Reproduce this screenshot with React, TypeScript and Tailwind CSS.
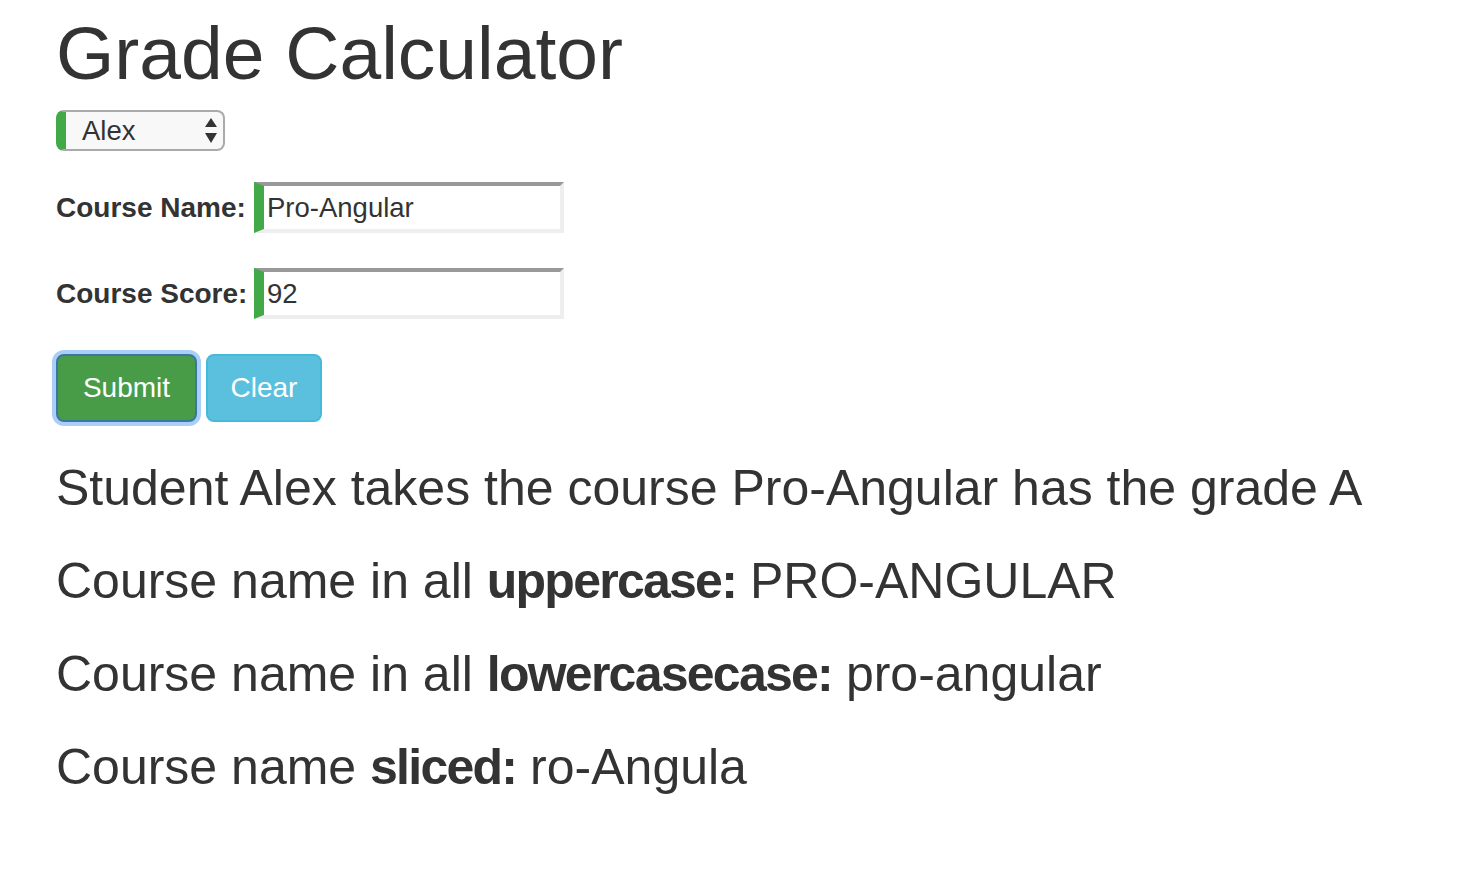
import React from "react";

export default function App() {
  const name = "Alex";
  const course = "Pro-Angular";
  return (
    <div
      className="min-h-screen bg-white text-[#333] pl-[56px]"
      style={{ fontFamily: '"Liberation Sans", Helvetica, Arial, sans-serif' }}
    >
      <h1 className="text-[75px] leading-[80px] font-normal pt-[13px] m-0">Grade Calculator</h1>

      <div className="mt-[17px] w-[169px] h-[41px] flex items-center justify-between border-2 border-[#aaa] border-l-[10px] border-l-[#42A948] rounded-[8px] bg-[#f8f8f8] pl-[16px] pr-[6px]">
        <span className="text-[27.5px] leading-none">{name}</span>
        <svg width="12" height="26" viewBox="0 0 12 26" className="block">
          <polygon points="6,0 12,9 0,9" fill="#333" />
          <polygon points="0,15 12,15 6,25" fill="#333" />
        </svg>
      </div>

      <div className="mt-[31px] flex items-center">
        <label className="w-[198px] font-bold text-[28px] leading-none">Course Name:</label>
        <div className="w-[310px] h-[51px] flex items-center border-solid border-t-4 border-r-4 border-b-4 border-t-[#999] border-r-[#eee] border-b-[#eee] border-l-[10px] border-l-[#42A948] bg-white pl-[3px]">
          <span className="text-[27.5px] leading-none">{course}</span>
        </div>
      </div>

      <div className="mt-[35px] flex items-center">
        <label className="w-[198px] font-bold text-[28px] leading-none">Course Score:</label>
        <div className="w-[310px] h-[51px] flex items-center border-solid border-t-4 border-r-4 border-b-4 border-t-[#999] border-r-[#eee] border-b-[#eee] border-l-[10px] border-l-[#42A948] bg-white pl-[3px]">
          <span className="text-[27.5px] leading-none">92</span>
        </div>
      </div>

      <div className="mt-[35px] flex items-center">
        <button className="w-[141px] h-[68px] bg-[#489c48] border-2 border-[#3a76a0] rounded-[8px] text-white text-[28px] shadow-[0_0_0_4px_#aacff6]">
          Submit
        </button>
        <button className="ml-[9px] w-[116px] h-[68px] bg-[#5bc0de] border-2 border-[#46b8da] rounded-[8px] text-white text-[28px]">
          Clear
        </button>
      </div>

      <h3 className="mt-[40px] text-[50px] leading-[53px] font-normal">
        Student {name} takes the course {course} has the grade A
      </h3>
      <h3 className="mt-[40px] text-[50px] leading-[53px] font-normal">
        Course name in all <b className="font-bold tracking-[-1.75px]">uppercase:</b> {course.toUpperCase()}
      </h3>
      <h3 className="mt-[40px] text-[50px] leading-[53px] font-normal">
        Course name in all <b className="font-bold tracking-[-1.75px]">lowercasecase:</b> {course.toLowerCase()}
      </h3>
      <h3 className="mt-[40px] text-[50px] leading-[53px] font-normal">
        Course name <b className="font-bold tracking-[-1.75px]">sliced:</b> {course.slice(1, 10)}
      </h3>
    </div>
  );
}
